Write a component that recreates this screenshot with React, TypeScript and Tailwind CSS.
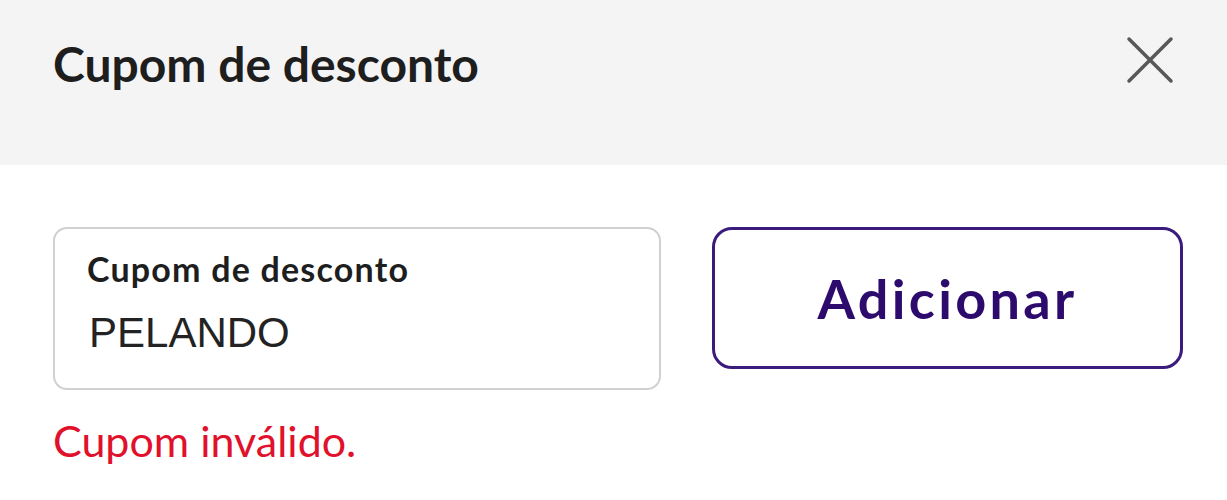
import React from 'react';

export default function App() {
  return (
    <div className="w-[1227px] h-[500px] bg-white font-['Lato',sans-serif] overflow-hidden">
      <div className="h-[165px] bg-[#f4f4f4] flex items-start justify-between pl-[53px] pr-[53px]">
        <h1 className="mt-[40px] text-[48px] font-bold text-[#1e1e1e] leading-none">Cupom de desconto</h1>
        <button aria-label="Fechar" className="mt-[36px] text-[#585858]">
          <svg width="48" height="48" viewBox="0 0 48 48" fill="none" stroke="currentColor" strokeWidth="3.5" strokeLinecap="round">
            <path d="M3 3L45 45M45 3L3 45" />
          </svg>
        </button>
      </div>
      <div className="pl-[53px] pt-[62px]">
        <div className="flex items-start gap-[51px]">
          <div className="shrink-0 w-[608px] h-[163px] border-2 border-[#d0d0d0] rounded-[14px] px-[32px] pt-[20px]">
            <label className="block text-[34px] font-bold tracking-[1.2px] text-[#1e1e1e] leading-[1.2]">Cupom de desconto</label>
            <input
              defaultValue="PELANDO"
              className="block w-full h-[48px] mt-[19px] pl-[2px] text-[42px] leading-[48px] text-[#232323] font-['Liberation_Sans',sans-serif] outline-none bg-transparent"
            />
          </div>
          <button className="shrink-0 w-[471px] h-[142px] border-[3px] border-[#3b1c7c] rounded-[20px] text-[54px] font-bold tracking-[3.3px] text-[#2d0b6d]">
            Adicionar
          </button>
        </div>
        <p className="mt-[25px] text-[43px] text-[#e1112c] leading-[1.2]">Cupom inválido.</p>
      </div>
    </div>
  );
}
